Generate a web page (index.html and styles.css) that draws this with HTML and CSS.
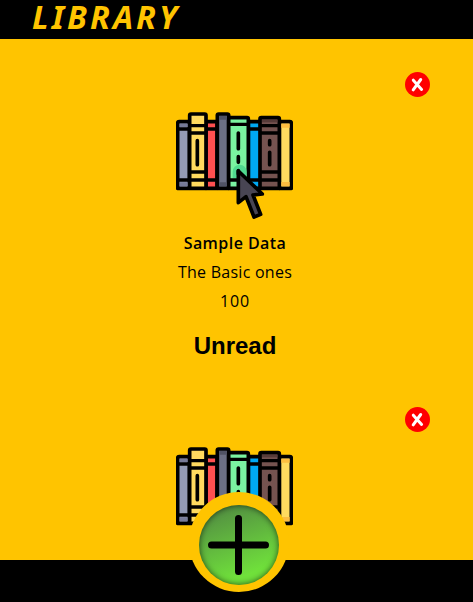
FILE: index.html
```html
<!DOCTYPE html>
<html lang="en">
<head>
<meta charset="utf-8">
<title>Library</title>
<link rel="stylesheet" href="styles.css">
</head>
<body>
<svg class="defs" width="0" height="0" aria-hidden="true">
  <symbol id="books" viewBox="33 33 351 327">
    <g stroke="#000" stroke-width="11" stroke-linejoin="round">
      <path fill="#949bb5" d="M38 265V69q0-4 4-4h31v200z"/>
      <path fill="#ff5050" d="M123 65h33v200h-33z"/>
      <path fill="#00a8f3" d="M250 65h38v200h-38z"/>
      <path fill="#ffda5f" d="M343 65h32q4 0 4 4v196h-36z"/>
      <path fill="#ffda5f" d="M74 265V46q0-4 4-4h41q4 0 4 4v219z"/>
      <path fill="#6c7085" d="M157 265V46q0-4 4-4h26q4 0 4 4v219z"/>
      <path fill="#7af3a1" d="M191 53h55q4 0 4 4v208h-59z"/>
      <path fill="#755350" d="M285 265V57q0-4 4-4h50q4 0 4 4v208z"/>
    </g>
    <path fill="#fdbd40" d="M349 71h25v12h-25zM349 246h25v13h-25z"/>
    <path fill="#777b98" d="M44 71h24v10H44zM44 247h24v12H44z"/>
    <path fill="#505365" d="M163 48h22v11h-22zM163 247h22v12h-22z"/>
    <path fill="#573b39" d="M291 59h46v8h-46z"/>
    <path fill="#50d990" d="M203 235v-20a19 19 0 0 1 42 0v20z"/>
    <path fill="none" stroke="#000" stroke-width="10" d="M38 87h35M74 77h49M74 99h49M123 87h33M191 73h59M250 87h35M285 77h58M285 99h58M38 240h35M74 216h49M74 240h49M123 240h33M191 240h59M250 240h35M285 216h58M285 240h58"/>
    <path fill="none" stroke="#000" stroke-width="11" stroke-linecap="round" d="M97 122v72M220 99v47M220 170v17M314 122v12M314 157v37M220 212v10"/>
    <path fill="#484553" stroke="#000" stroke-width="11" stroke-linejoin="round" d="M220 213v95l23-18 24 61 20-8-23-58 28-3z"/>
  </symbol>
</svg>
<header class="header"><h1>LIBRARY</h1></header>
<main class="library">
  <article class="book">
    <button class="remove" aria-label="Remove"><svg viewBox="0 0 25 25"><circle cx="12.5" cy="12.5" r="12.5"/><path d="M8.3 8.2 16.6 17.4M15.7 7.5 8.2 17.9"/></svg></button>
    <svg class="cover"><use href="#books"/></svg>
    <h2>Sample Data</h2>
    <p class="author">The Basic ones</p>
    <p class="pages">100</p>
    <button class="status">Unread</button>
  </article>
  <article class="book">
    <button class="remove" aria-label="Remove"><svg viewBox="0 0 25 25"><circle cx="12.5" cy="12.5" r="12.5"/><path d="M8.3 8.2 16.6 17.4M15.7 7.5 8.2 17.9"/></svg></button>
    <svg class="cover"><use href="#books"/></svg>
  </article>
</main>
<button class="add" aria-label="Add book">
  <span class="disc"><svg viewBox="0 0 80 80"><path d="M39.5 13.5v53M12.5 40h54"/></svg></span>
</button>
</body>
</html>
```
FILE: styles.css
```css
* { box-sizing: border-box; margin: 0; padding: 0; }

body {
  height: 602px;
  overflow: hidden;
  background: #000;
  font-family: "Open Sans", "Noto Sans", sans-serif;
}

button { border: 0; background: none; color: #000; }
svg { display: block; }
.defs { position: absolute; }

.header { height: 39px; padding-left: 32px; color: #ffc400; }

.header h1 {
  font: italic 700 32px/34px "Noto Sans", sans-serif;
  letter-spacing: 3.1px;
}

.library { height: 521px; overflow: hidden; background: #ffc400; }

.book {
  display: flex;
  flex-direction: column;
  align-items: center;
  width: 470px;
  height: 335px;
  padding-top: 33px;
}

.remove { align-self: flex-end; width: 25px; height: 25px; margin-right: 40px; }
.remove svg { width: 25px; height: 25px; fill: #f00; }
.remove path { stroke: #fff; stroke-width: 3; stroke-linecap: round; }

.cover { flex: none; width: 117px; height: 109px; margin: 14px 1px 0 0; }

.book h2,
.book p { font-size: 16px; line-height: 29px; }

.book h2 { margin-top: 9px; font-weight: 600; letter-spacing: .45px; }
.author { letter-spacing: .25px; }
.pages { letter-spacing: .9px; }

.status {
  margin-top: 16px;
  font: 700 24px/28px "Liberation Sans", sans-serif;
}

.add {
  position: absolute;
  top: 492px;
  left: 189px;
  width: 100px;
  height: 100px;
  padding: 13px 10px 7px;
  border-radius: 50%;
  background: #ffc400;
}

.disc {
  display: block;
  width: 80px;
  height: 80px;
  border-radius: 50%;
  background: linear-gradient(160deg, #538f42 10%, #70e13b 80%);
  box-shadow: inset 0 0 6px rgba(0, 0, 0, .65);
}

.disc path { fill: none; stroke: #000; stroke-width: 7; stroke-linecap: round; }
```
